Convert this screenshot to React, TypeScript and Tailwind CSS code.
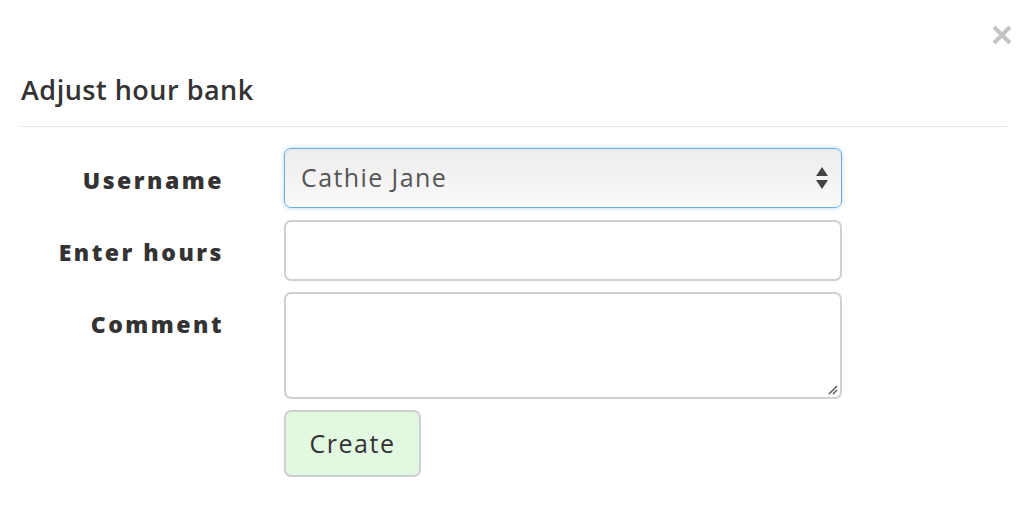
export default function App() {
  return (
    <div className="w-[1034px] h-[516px] bg-white relative font-['Open_Sans',sans-serif] text-[#333]">
      <button className="absolute right-[20px] top-[23px] text-[#c4c4c4]">
        <svg width="24" height="24" viewBox="0 0 24 24">
          <path d="M4 4 L20 20 M20 4 L4 20" stroke="currentColor" strokeWidth="4" />
        </svg>
      </button>
      <div className="px-[21px] pt-[72px]">
        <h4 className="text-[27px] font-semibold leading-[36px] tracking-[0.5px] text-[#333]">Adjust hour bank</h4>
        <div className="mt-[18px] border-t border-[#e5e5e5] w-[986px]" />
        <form className="mt-[21px] grid grid-cols-[203px_558px] gap-x-[60px]">
          <label className="h-[60px] pt-[5px] flex items-center justify-end font-extrabold text-[23px] tracking-[2.5px]">Username</label>
          <div className="h-[60px] rounded-[7px] border border-[#66afe9] bg-gradient-to-b from-[#ececec] to-[#fafafa] shadow-[0_0_4px_rgba(102,175,233,0.5)] flex items-center justify-between pl-[16px] pr-[12px]">
            <span className="text-[25px] tracking-[1.4px] text-[#555]">Cathie Jane</span>
            <svg width="14" height="26" viewBox="0 0 14 26">
              <path d="M7 2 L13 11 L1 11 Z M1 15 L13 15 L7 24 Z" fill="#444" />
            </svg>
          </div>

          <label className="mt-[12px] h-[61px] pt-[3px] flex items-center justify-end font-extrabold text-[23px] tracking-[2.5px]">Enter hours</label>
          <div className="mt-[12px] h-[61px] rounded-[7px] border-2 border-[#d0d0d0] bg-white" />

          <label className="mt-[11px] h-[50px] pt-[14px] flex items-center justify-end font-extrabold text-[23px] tracking-[2.5px]">Comment</label>
          <div className="mt-[11px] h-[107px] rounded-[7px] border-2 border-[#d0d0d0] bg-white relative">
            <svg className="absolute right-[2px] bottom-[2px]" width="12" height="12" viewBox="0 0 12 12">
              <path d="M11 3 L3 11 M11 7 L7 11" stroke="#555" strokeWidth="1.5" />
            </svg>
          </div>

          <div />
          <div className="mt-[11px]">
            <button type="button" className="h-[67px] w-[137px] rounded-[7px] border-2 border-[#cfcfcf] bg-[#e2f8e0] text-[25px] tracking-[1.5px] text-[#333]">
              Create
            </button>
          </div>
        </form>
      </div>
    </div>
  );
}
